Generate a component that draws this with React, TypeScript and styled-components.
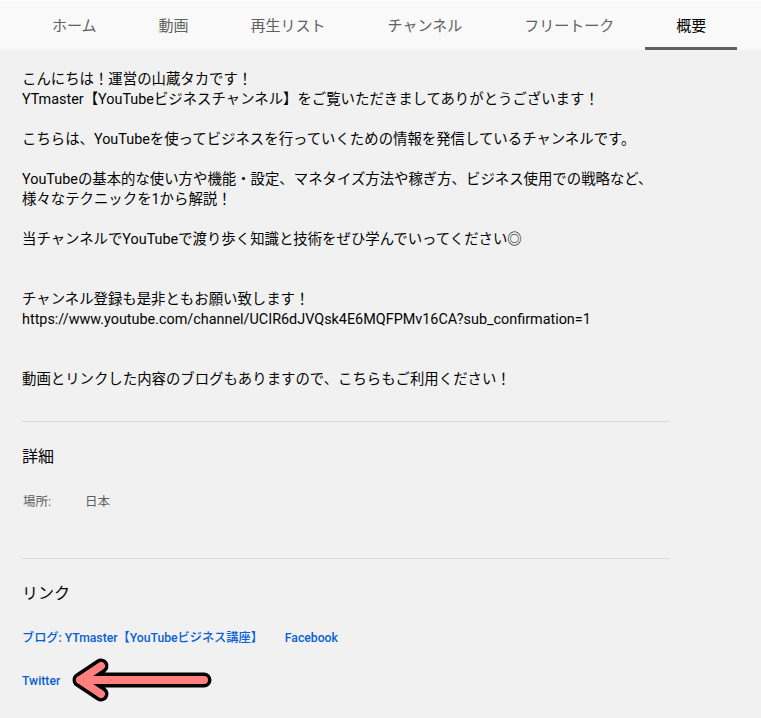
import React from "react";
import styled, { createGlobalStyle } from "styled-components";

const GlobalStyle = createGlobalStyle`
  html, body { margin: 0; padding: 0; background: #f1f1f1; }
  body { font-family: Roboto, "Noto Sans CJK JP", "Noto Sans", sans-serif; color: #030303; }
`;

const Page = styled.div`
  position: relative;
  width: 761px;
  min-height: 718px;
  background: #f1f1f1;
  overflow: hidden;
`;

const TabBar = styled.nav`
  display: flex;
  height: 50px;
  box-sizing: border-box;
  padding-left: 21px;
  background: #f9f9f9;
  border-top: 2px solid #fdfdfd;
`;

const Tab = styled.div<{ $active?: boolean }>`
  display: flex;
  align-items: center;
  height: 48px;
  box-sizing: border-box;
  padding: 0 31px;
  font-size: 15px;
  color: ${(p) => (p.$active ? "#030303" : "#606060")};
  border-bottom: 3px solid ${(p) => (p.$active ? "#606060" : "transparent")};
  white-space: nowrap;
`;

const Content = styled.main`
  width: 648px;
  padding: 20px 0 0 22px;
`;

const Description = styled.div`
  font-size: 14.4px;
  line-height: 20px;
  white-space: pre;
  color: #030303;
`;

const Divider = styled.hr<{ $top: number }>`
  border: 0;
  border-top: 1px solid #d9d9d9;
  margin: ${(p) => p.$top}px 0 0;
`;

const Section = styled.section<{ $pad?: number }>`
  padding-top: ${(p) => p.$pad ?? 23}px;
`;

const Heading = styled.h2`
  margin: 0;
  font-size: 16px;
  line-height: 22px;
  font-weight: 400;
  color: #030303;
`;

const DetailRow = styled.div`
  display: grid;
  grid-template-columns: 62px auto;
  margin-top: 25px;
  padding-left: 1px;
  font-size: 12.5px;
  line-height: 18px;
  color: #606060;
`;

const LinkList = styled.div`
  display: flex;
  flex-direction: column;
  gap: 25px;
  margin-top: 24px;
`;

const LinkRow = styled.div`
  display: flex;
  gap: 22px;
`;

const Link = styled.a`
  font-size: 12.2px;
  line-height: 18px;
  font-weight: 500;
  color: #065fd4;
  text-decoration: none;
  white-space: nowrap;
`;

const Arrow = styled.svg`
  position: absolute;
  left: 60px;
  top: 651px;
  width: 170px;
  height: 60px;
  overflow: visible;
`;

const tabs = ["ホーム", "動画", "再生リスト", "チャンネル", "フリートーク", "概要"];

const description = `こんにちは！運営の山蔵タカです！
YTmaster【YouTubeビジネスチャンネル】をご覧いただきましてありがとうございます！

こちらは、YouTubeを使ってビジネスを行っていくための情報を発信しているチャンネルです。

YouTubeの基本的な使い方や機能・設定、マネタイズ方法や稼ぎ方、ビジネス使用での戦略など、
様々なテクニックを1から解説！

当チャンネルでYouTubeで渡り歩く知識と技術をぜひ学んでいってください◎


チャンネル登録も是非ともお願い致します！
https://www.youtube.com/channel/UCIR6dJVQsk4E6MQFPMv16CA?sub_confirmation=1


動画とリンクした内容のブログもありますので、こちらもご利用ください！`;

const arrowPath = "M144 29 L20 29 M41 15 L20 29 L41 43";

export default function App() {
  return (
    <Page>
      <GlobalStyle />
      <TabBar>
        {tabs.map((t) => (
          <Tab key={t} $active={t === "概要"}>
            {t}
          </Tab>
        ))}
      </TabBar>
      <Content>
        <Description>{description}</Description>
        <Divider $top={31} />
        <Section $pad={24}>
          <Heading>詳細</Heading>
          <DetailRow>
            <span>場所:</span>
            <span>日本</span>
          </DetailRow>
        </Section>
        <Divider $top={47} />
        <Section $pad={24}>
          <Heading>リンク</Heading>
          <LinkList>
            <LinkRow>
              <Link href="#">ブログ: YTmaster【YouTubeビジネス講座】</Link>
              <Link href="#">Facebook</Link>
            </LinkRow>
            <LinkRow>
              <Link href="#">Twitter</Link>
            </LinkRow>
          </LinkList>
        </Section>
      </Content>
      <Arrow viewBox="0 0 170 60">
        <path d={arrowPath} fill="none" stroke="#000" strokeWidth={15} strokeLinecap="round" strokeLinejoin="round" />
        <path d={arrowPath} fill="none" stroke="#ff7f7f" strokeWidth={8} strokeLinecap="round" strokeLinejoin="round" />
      </Arrow>
    </Page>
  );
}
